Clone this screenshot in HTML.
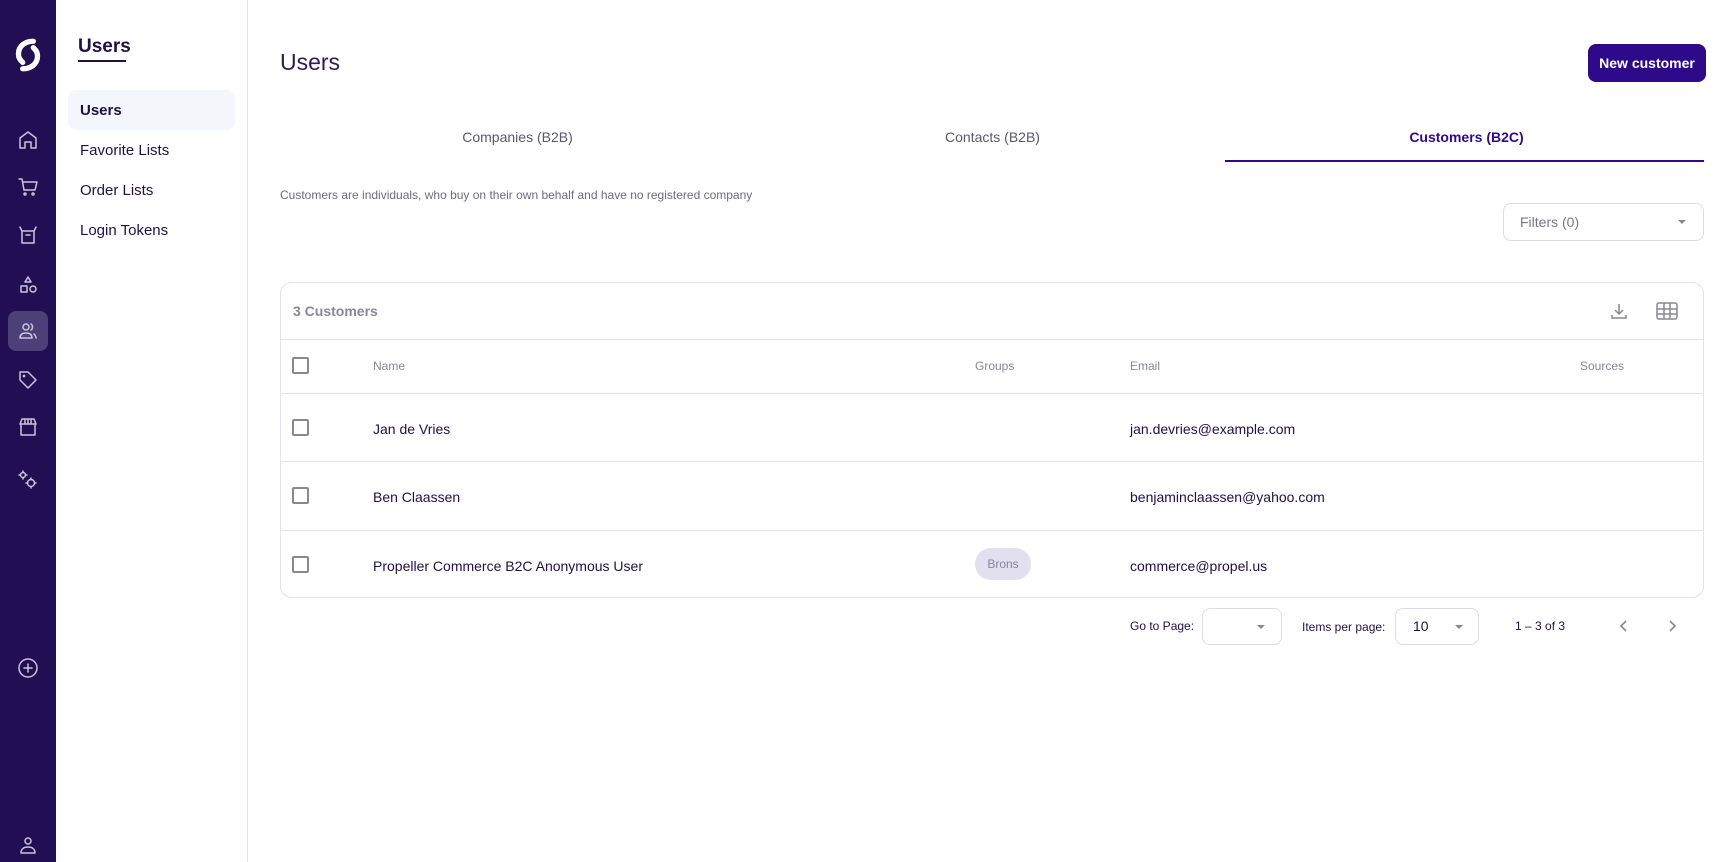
<!DOCTYPE html>
<html><head><meta charset="utf-8"><style>
*{box-sizing:border-box;margin:0;padding:0}
body{width:1736px;height:862px;overflow:hidden;background:#fff;font-family:"Liberation Sans",sans-serif;color:#1f1147;position:relative}
.abs{position:absolute}
.rail{left:0;top:0;width:56px;height:862px;background:#220e52}
.ic{position:absolute;left:16px;width:24px;height:24px}
.ic svg{width:24px;height:24px;fill:none;stroke:#c9c3dc;stroke-width:1.5;stroke-linecap:round;stroke-linejoin:round}
.sub{left:56px;top:0;width:192px;height:862px;border-right:1px solid #e4e4ea}
.t{white-space:nowrap}
.tab{top:129px;width:475px;text-align:center;font-size:14px;color:#5b5670}
.cb{position:absolute;left:292px;width:17px;height:17px;border:2px solid #8a8699;border-radius:2px}
.hline{position:absolute;left:280px;width:1424px;height:1px;background:#e3e1ec}
.row{font-size:14px;color:#1f1147}
.hd{font-size:12px;color:#8a8699}
.sel{border:1px solid #dedbe8;border-radius:8px}
.caret{position:absolute;width:0;height:0;border-left:4px solid transparent;border-right:4px solid transparent;border-top:4px solid #8a8699}
</style></head><body>
<div class="abs rail"></div>
<svg class="abs" style="left:13px;top:37px" width="30" height="36" viewBox="0 0 28 34">
<path d="M19 4 C12 4 5 8 5 16 C5 20 7 22 9 24" stroke="#fff" stroke-width="5" fill="none" stroke-linecap="round"/>
<path d="M9 30 C16 30 23 26 23 18 C23 14 21 12 19 10" stroke="#fff" stroke-width="5" fill="none" stroke-linecap="round"/>
</svg>
<div class="ic" style="top:128px"><svg viewBox="0 0 24 24"><path d="M4 20V10l8-6 8 6v10h-5v-6h-6v6z"/></svg></div>
<div class="ic" style="top:175px"><svg viewBox="0 0 24 24"><path d="M3 4h3l2 11h11l2-8H7"/><circle cx="9" cy="19" r="1"/><circle cx="17" cy="19" r="1"/></svg></div>
<div class="ic" style="top:223px"><svg viewBox="0 0 24 24"><path d="M4 4l2 4h12l2-4M6 8v12h12V8M10 12h4"/></svg></div>
<div class="ic" style="top:273px"><svg viewBox="0 0 24 24"><path d="M12 4l3 5H9z"/><rect x="5" y="13" width="6" height="6"/><circle cx="17" cy="16" r="3"/></svg></div>
<div class="abs" style="left:8px;top:311px;width:40px;height:40px;background:#4d3f78;border-radius:8px"></div>
<div class="ic" style="top:319px"><svg viewBox="0 0 24 24"><circle cx="10" cy="8" r="3"/><path d="M4 19c0-4 3-5 6-5s6 1 6 5zM15 5c2 1 2 5 0 6M18 15c1 1 2 2 2 4"/></svg></div>
<div class="ic" style="top:368px"><svg viewBox="0 0 24 24"><path d="M4 4h8l8 8-8 8-8-8z"/><circle cx="8" cy="8" r=".6"/></svg></div>
<div class="ic" style="top:415px"><svg viewBox="0 0 24 24"><path d="M4 9l2-5h12l2 5zM5 9v11h14V9M9 4v5M12 4v5M15 4v5"/></svg></div>
<div class="ic" style="top:468px"><svg viewBox="0 0 24 24"><circle cx="7" cy="7" r="2.5"/><circle cx="15" cy="15" r="3.5"/><path d="M7 3v1.5M7 9.5V11M3 7h1.5M9.5 7H11M15 10v1.5M15 18.5V20M10 15h1.5M18.5 15H20"/></svg></div>
<div class="ic" style="top:656px"><svg viewBox="0 0 24 24"><circle cx="12" cy="12" r="9"/><path d="M12 8v8M8 12h8"/></svg></div>
<div class="ic" style="top:833px"><svg viewBox="0 0 24 24"><circle cx="12" cy="8" r="3"/><path d="M5 20c0-4 3-6 7-6s7 2 7 6z"/></svg></div>

<div class="abs sub"></div>
<div class="abs t" style="left:78px;top:36px;font-size:19px;font-weight:bold;color:#1f1147">Users</div>
<div class="abs" style="left:78px;top:60px;width:48px;height:2px;background:#1f1147"></div>
<div class="abs" style="left:68px;top:90px;width:167px;height:40px;background:#f3f7fc;border-radius:8px"></div>
<div class="abs t" style="left:80px;top:102px;font-size:15px;font-weight:bold">Users</div>
<div class="abs t" style="left:80px;top:142px;font-size:15px">Favorite Lists</div>
<div class="abs t" style="left:80px;top:182px;font-size:15px">Order Lists</div>
<div class="abs t" style="left:80px;top:222px;font-size:15px">Login Tokens</div>

<div class="abs t" style="left:280px;top:49px;font-size:23px;color:#2a1d55">Users</div>
<div class="abs t" style="left:1588px;top:44px;width:118px;height:38px;background:#2e0a8a;border-radius:8px;color:#fff;font-size:14px;font-weight:bold;text-align:center;line-height:38px">New customer</div>

<div class="abs tab" style="left:280px">Companies (B2B)</div>
<div class="abs tab" style="left:755px">Contacts (B2B)</div>
<div class="abs tab" style="left:1229px;color:#2e0a8a;font-weight:bold">Customers (B2C)</div>
<div class="abs" style="left:1225px;top:160px;width:479px;height:2px;background:#2e0a8a"></div>
<div class="abs t" style="left:280px;top:188px;font-size:12px;color:#6f6a85">Customers are individuals, who buy on their own behalf and have no registered company</div>

<div class="abs sel" style="left:1503px;top:203px;width:201px;height:38px"></div>
<div class="abs t" style="left:1520px;top:214px;font-size:14px;color:#7a768a">Filters (0)</div>
<div class="caret" style="left:1678px;top:220px"></div>

<div class="abs" style="left:280px;top:282px;width:1424px;height:316px;border:1px solid #e3e1ec;border-radius:12px"></div>
<div class="abs t" style="left:293px;top:303px;font-size:14px;font-weight:bold;color:#8a8699">3 Customers</div>
<svg class="abs" style="left:1609px;top:301px" width="20" height="20" viewBox="0 0 20 20" fill="none" stroke="#8a8699" stroke-width="1.5"><path d="M10 3v10M6 9l4 4 4-4M3 14v3h14v-3"/></svg>
<svg class="abs" style="left:1656px;top:302px" width="22" height="18" viewBox="0 0 22 18" fill="none" stroke="#8a8699" stroke-width="1.5"><rect x="1" y="1" width="20" height="16" rx="2"/><path d="M1 7h20M1 12h20M8 1v16M14 1v16"/></svg>
<div class="hline" style="top:339px"></div>
<div class="cb" style="top:357px"></div>
<div class="abs t hd" style="left:373px;top:359px">Name</div>
<div class="abs t hd" style="left:975px;top:359px">Groups</div>
<div class="abs t hd" style="left:1130px;top:359px">Email</div>
<div class="abs t hd" style="left:1580px;top:359px">Sources</div>
<div class="hline" style="top:393px"></div>
<div class="cb" style="top:419px"></div>
<div class="abs t row" style="left:373px;top:421px">Jan de Vries</div>
<div class="abs t row" style="left:1130px;top:421px">jan.devries@example.com</div>
<div class="hline" style="top:461px"></div>
<div class="cb" style="top:487px"></div>
<div class="abs t row" style="left:373px;top:489px">Ben Claassen</div>
<div class="abs t row" style="left:1130px;top:489px">benjaminclaassen@yahoo.com</div>
<div class="hline" style="top:530px"></div>
<div class="cb" style="top:556px"></div>
<div class="abs t row" style="left:373px;top:558px">Propeller Commerce B2C Anonymous User</div>
<div class="abs t" style="left:975px;top:548px;width:56px;height:32px;border-radius:16px;background:#e2dfee;color:#8a8699;font-size:12px;text-align:center;line-height:32px">Brons</div>
<div class="abs t row" style="left:1130px;top:558px">commerce@propel.us</div>

<div class="abs t" style="left:1130px;top:619px;font-size:12px;color:#1f1147">Go to Page:</div>
<div class="abs sel" style="left:1202px;top:608px;width:80px;height:37px"></div>
<div class="caret" style="left:1257px;top:625px"></div>
<div class="abs t" style="left:1302px;top:620px;font-size:12px;color:#1f1147">Items per page:</div>
<div class="abs sel" style="left:1395px;top:608px;width:84px;height:37px"></div>
<div class="abs t" style="left:1413px;top:618px;font-size:14px">10</div>
<div class="caret" style="left:1455px;top:625px"></div>
<div class="abs t" style="left:1515px;top:619px;font-size:12px">1 – 3 of 3</div>
<svg class="abs" style="left:1617px;top:618px" width="14" height="16" viewBox="0 0 14 16" fill="none" stroke="#8a8699" stroke-width="1.6"><path d="M9 3L4 8l5 5"/></svg>
<svg class="abs" style="left:1665px;top:618px" width="14" height="16" viewBox="0 0 14 16" fill="none" stroke="#8a8699" stroke-width="1.6"><path d="M5 3l5 5-5 5"/></svg>
</body></html>
